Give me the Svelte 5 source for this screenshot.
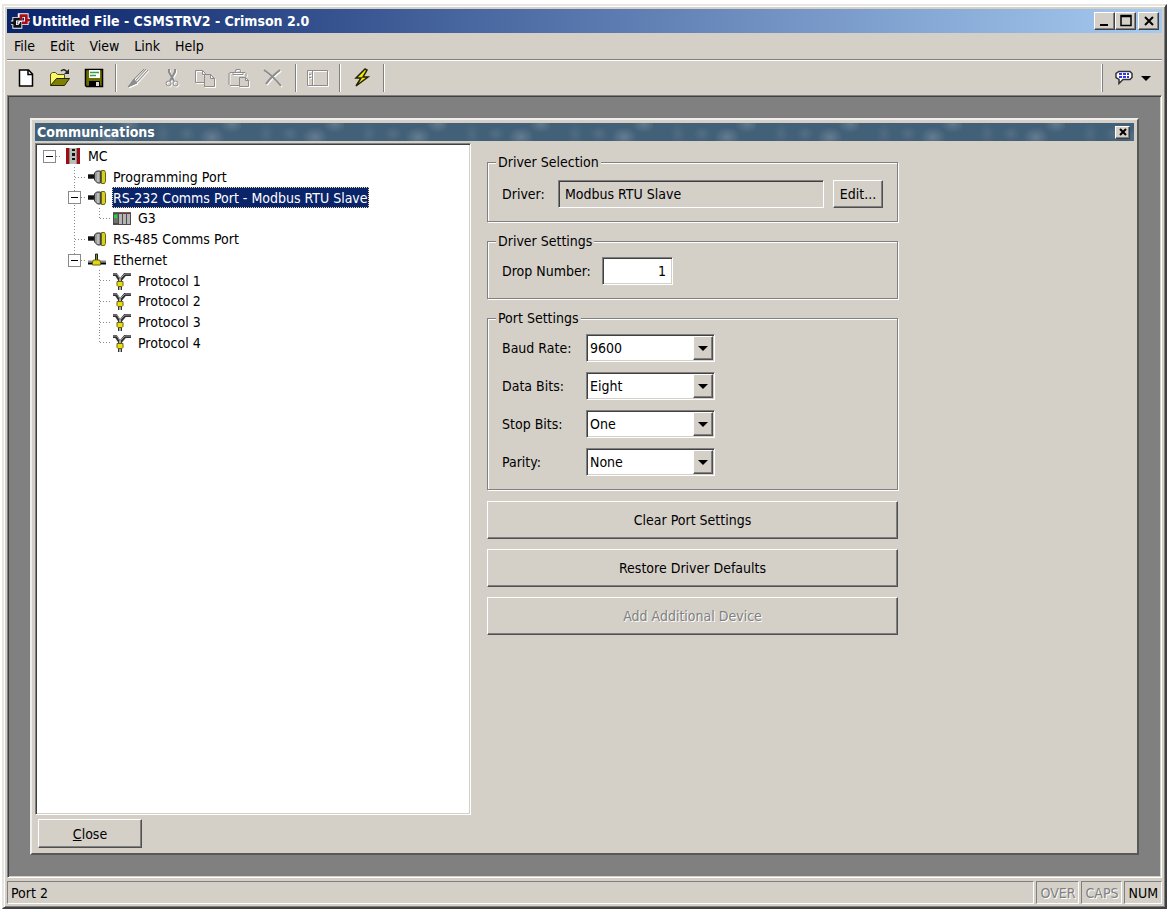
<script lang="ts">
	type Guide = 'blank' | 'line' | 'tee' | 'end' | 'root' | 'box' | 'boxend';
	type Icon = 'device' | 'port' | 'rack' | 'ethernet' | 'protocol';

	interface TreeRow {
		label: string;
		icon: Icon;
		guides: Guide[];
	}

	const menus = ['File', 'Edit', 'View', 'Link', 'Help'];

	const rows: TreeRow[] = [
		{ label: 'MC', icon: 'device', guides: ['root'] },
		{ label: 'Programming Port', icon: 'port', guides: ['blank', 'tee'] },
		{ label: 'RS-232 Comms Port - Modbus RTU Slave', icon: 'port', guides: ['blank', 'box'] },
		{ label: 'G3', icon: 'rack', guides: ['blank', 'line', 'end'] },
		{ label: 'RS-485 Comms Port', icon: 'port', guides: ['blank', 'tee'] },
		{ label: 'Ethernet', icon: 'ethernet', guides: ['blank', 'boxend'] },
		{ label: 'Protocol 1', icon: 'protocol', guides: ['blank', 'blank', 'tee'] },
		{ label: 'Protocol 2', icon: 'protocol', guides: ['blank', 'blank', 'tee'] },
		{ label: 'Protocol 3', icon: 'protocol', guides: ['blank', 'blank', 'tee'] },
		{ label: 'Protocol 4', icon: 'protocol', guides: ['blank', 'blank', 'end'] }
	];

	const portSettings = [
		{ id: 'baud', label: 'Baud Rate:', value: '9600', options: ['1200', '2400', '4800', '9600', '19200'] },
		{ id: 'data', label: 'Data Bits:', value: 'Eight', options: ['Seven', 'Eight'] },
		{ id: 'stop', label: 'Stop Bits:', value: 'One', options: ['One', 'Two'] },
		{ id: 'parity', label: 'Parity:', value: 'None', options: ['None', 'Odd', 'Even'] }
	];

	let selected = $state(2);
	let dropNumber = $state('1');
	let driver = $state('Modbus RTU Slave');
</script>

{#snippet guide(kind: Guide)}
	<svg class="guide" aria-hidden="true">
		{#if kind === 'line' || kind === 'tee' || kind === 'box'}
			<line x1="12.5" y1="0" x2="12.5" y2="100%" />
		{:else if kind === 'end' || kind === 'boxend'}
			<line x1="12.5" y1="0" x2="12.5" y2="50%" />
		{/if}
		{#if kind !== 'blank' && kind !== 'line'}
			<line x1="13" y1="10.5" x2="25" y2="10.5" />
		{/if}
		{#if kind === 'root' || kind === 'box' || kind === 'boxend'}
			<rect x="6.5" y="4.5" width="12" height="12" />
			<path d="M9 10.5h7" />
		{/if}
	</svg>
{/snippet}

{#snippet treeIcon(name: Icon)}
	<svg class="tree-icon" viewBox="0 0 20 20" aria-hidden="true">
		{#if name === 'device'}
			<rect x="4" y="2" width="13" height="16" fill="#b9bdba" />
			<rect x="4" y="2" width="3" height="16" fill="#a00c14" />
			<rect x="15" y="2" width="3" height="16" fill="#a00c14" />
			<path d="M7.5 2v16M14.5 2v16" stroke="#8a8a8a" />
			<path d="M10 3h3v2h-3zM10 7h3v3h-3zM10 12h3v2h-3z" fill="#111" />
		{:else if name === 'port'}
			<path d="M1 7.5h7M1 11.5h7" stroke="#555" />
			<path d="M1 9.5h7" stroke="#111" stroke-width="3" />
			<path d="M7.5 6l2-2h4v12h-3l-3-3z" fill="#999" stroke="#333" />
			<path d="M14.5 3.5h3l1 2v9l-1 2h-3z" fill="#d9d01c" stroke="#66661a" />
			<path d="M11 5v10" stroke="#ddd" />
			<path d="M13.5 4v12" stroke="#444" />
		{:else if name === 'rack'}
			<rect x="1" y="4" width="18" height="13" fill="#4c4c4c" />
			<rect x="2" y="6" width="4" height="9" fill="#707070" />
			<path d="M8.5 6v10M12.5 6v10M16.5 6v10" stroke="#b4b4b4" stroke-width="3" />
			<path d="M8 5h2v1h-2zM12 5h2v1h-2zM16 5h2v1h-2z" fill="#b01818" />
			<rect x="2" y="7" width="3" height="3" fill="#12e22c" />
			<path d="M1 4.5h18" stroke="#666" />
		{:else if name === 'ethernet'}
			<path d="M8.5 4h2v7h-2z" fill="#8c8c30" stroke="#222" />
			<path d="M1 11.5h18" stroke="#888" stroke-width="2" />
			<path d="M1 13.5h18" stroke="#000" stroke-width="2" />
			<path d="M6.500 10h6l1 2v3h-8v-3z" fill="#e0d714" stroke="#66620c" />
		{:else}
			<path d="M1 3.5h3l4 6 5-6h6" fill="none" stroke="#333" stroke-width="3" />
			<path d="M1 3h4l3 5 5-5h6" fill="none" stroke="#999" />
			<path d="M8 8v11" stroke="#333" stroke-width="4" />
			<path d="M8 8v11" stroke="#aaa" stroke-width="2" />
			<path d="M5 10.5h6v4l-1 1h-4l-1-1z" fill="#e8df10" stroke="#66620c" />
		{/if}
	</svg>
{/snippet}

<div class="desktop">
	<div class="window">
		<header class="title-bar">
			<svg class="app-icon" viewBox="0 0 23 20" aria-hidden="true">
				<g fill="none">
					<path d="M1 12h4M12 8h-7v8h6v-5M22 9h-5M10 12h8v-8h-7v5" stroke="#fff" stroke-width="5" />
					<path d="M12 8h-7v8h6v-5M1 12h4" stroke="#111" stroke-width="3" />
					<path d="M22 9h-4M13 12h5v-8h-6v5" stroke="#a80d18" stroke-width="3" />
					<path d="M8 12h3M10 10v3" stroke="#fff" />
				</g>
			</svg>
			<h1>Untitled File - CSMSTRV2 - Crimson 2.0</h1>
			<div class="window-buttons">
				<button type="button" aria-label="Minimize">
					<svg viewBox="0 0 16 14"><path d="M3 11h8" stroke="#000" stroke-width="2" /></svg>
				</button>
				<button type="button" aria-label="Maximize">
					<svg viewBox="0 0 16 14"><path d="M3 1.5h10v10h-10zM3 2.5h10" fill="none" stroke="#000" stroke-width="1.5" /></svg>
				</button>
				<button type="button" class="close" aria-label="Close window">
					<svg viewBox="0 0 16 14"><path d="M4 3l8 8M12 3l-8 8" stroke="#000" stroke-width="2" /></svg>
				</button>
			</div>
		</header>

		<nav class="menu-bar">
			{#each menus as menu}
				<button type="button">{menu}</button>
			{/each}
		</nav>

		<div class="tool-bar">
			<button type="button" aria-label="New">
				<svg viewBox="0 0 24 24">
					<path d="M5.5 4h9l4 4v12h-13z" fill="#fff" stroke="#000" stroke-width="1.5" />
					<path d="M14 4v4.5h5" fill="none" stroke="#000" stroke-width="1.5" />
				</svg>
			</button>
			<button type="button" aria-label="Open">
				<svg viewBox="0 0 24 24">
					<path d="M2.5 19v-11l2-1.5h3l2 2h7v4" fill="#fbf76a" stroke="#55520a" />
					<path d="M2.5 19.5l6-7h13l-5 7z" fill="#808000" stroke="#222200" />
					<path d="M13 5q3-3 6 1" fill="none" stroke="#222" stroke-width="1.5" />
					<path d="M16 8h5v-5z" fill="#222" />
				</svg>
			</button>
			<button type="button" aria-label="Save">
				<svg viewBox="0 0 24 24">
					<path d="M3.5 3.5h17v17h-16l-1-1z" fill="#6c6c00" stroke="#000" stroke-width="1.5" />
					<rect x="7" y="4" width="11" height="8" fill="#fff" />
					<path d="M8 6.5h9M8 9.5h6" stroke="#3f9d48" stroke-width="1.5" />
					<rect x="7" y="15" width="11" height="6" fill="#000" />
					<rect x="14" y="16" width="3" height="4" fill="#ddd" />
				</svg>
			</button>
			<span class="separator"></span>
			<button type="button" aria-label="Properties" disabled>
				<svg viewBox="0 0 24 24">
					<path d="M3 21l5-8 10-10M8 18l4-3 10-11M10 14l10-11" />
					<path d="M2 21l6-8 3 4z" class="solid" />
				</svg>
			</button>
			<button type="button" aria-label="Cut" disabled>
				<svg viewBox="0 0 24 24">
					<path class="heavy" d="M9 3v3l5 9M15 3v3l-5 9" />
					<circle cx="8.5" cy="17.5" r="2.5" />
					<circle cx="15.5" cy="17.5" r="2.5" />
				</svg>
			</button>
			<button type="button" aria-label="Copy" disabled>
				<svg viewBox="0 0 24 24">
					<path d="M1.5 4.5h7l3 3v9h-10zM8.5 4.5v4h3" />
					<path class="paper" d="M10.5 8.5h6l4 4v8h-10zM16.5 8.5v4h4" />
				</svg>
			</button>
			<button type="button" aria-label="Paste" disabled>
				<svg viewBox="0 0 24 24">
					<path d="M11 19.5h-9l-1-1v-11l1-1h15l1 1v3M5 8.5v-2h2l1-3h4l1 3h2v2z" />
					<path class="paper" d="M11.5 11.5h6l3 3v6h-9zM17.5 11.5v3h3" />
				</svg>
			</button>
			<button type="button" aria-label="Delete" disabled>
				<svg viewBox="0 0 24 24"><path class="heavy" d="M2 4q9 6 17 16M18 4q-9 7-14 14" /></svg>
			</button>
			<span class="separator"></span>
			<button type="button" aria-label="Toggle panes" disabled>
				<svg viewBox="0 0 24 24"><path d="M1.5 4.5h20v15h-20zM6.5 4.5v15M3 8.5h2M3 11.5h2" /></svg>
			</button>
			<span class="separator"></span>
			<button type="button" aria-label="Download">
				<svg viewBox="0 0 24 24">
					<path d="M15 3l-9 9h5l-5 8 12-9h-5l4-7z" fill="#f0e60c" stroke="#222200" stroke-width="1.5" />
				</svg>
			</button>
			<span class="separator"></span>
			<div class="language">
				<span class="separator raised"></span>
				<button type="button" aria-label="Language">
					<svg viewBox="0 0 24 24">
						<path d="M6 5.5h11l2 2v4l-2 2h-7l-4 4v-4l-3-2v-4z" fill="#fff" stroke="#333" stroke-width="1.5" />
						<path d="M6 8h10M6 11h10" stroke="#3434e8" stroke-width="2" stroke-dasharray="3 1" />
					</svg>
				</button>
				<button type="button" class="drop" aria-label="Choose language">
					<svg viewBox="0 0 10 5"><path d="M0 0h10l-5 5z" fill="#000" /></svg>
				</button>
			</div>
		</div>

		<main class="workspace sunken">
			<section class="child">
				<header class="child-title">
					<h2>Communications</h2>
					<button type="button" aria-label="Close Communications">
						<svg viewBox="0 0 12 10"><path d="M3 2l6 6M9 2l-6 6" stroke="#000" stroke-width="2" /></svg>
					</button>
				</header>

				<div class="panes">
					<div class="tree sunken" role="tree">
						<div class="rows">
							{#each rows as row, i}
								<div class="row" role="treeitem" aria-selected={selected === i}>
									{#each row.guides as kind}
										{@render guide(kind)}
									{/each}
									{@render treeIcon(row.icon)}
									<button type="button" class:selected={selected === i} onclick={() => (selected = i)}>
										{row.label}
									</button>
								</div>
							{/each}
						</div>
					</div>

					<form class="settings">
						<fieldset class="selection">
							<legend>Driver Selection</legend>
							<div class="field driver">
								<label for="driver">Driver:</label>
								<input id="driver" class="sunken" type="text" readonly bind:value={driver} />
								<button type="button">Edit...</button>
							</div>
						</fieldset>

						<fieldset>
							<legend>Driver Settings</legend>
							<div class="field drop-number">
								<label for="drop">Drop Number:</label>
								<input id="drop" class="sunken" type="text" bind:value={dropNumber} />
							</div>
						</fieldset>

						<fieldset class="port">
							<legend>Port Settings</legend>
							{#each portSettings as setting}
								<div class="field">
									<label for={setting.id}>{setting.label}</label>
									<div class="combo sunken">
										<select id={setting.id} value={setting.value}>
											{#each setting.options as option}
												<option>{option}</option>
											{/each}
										</select>
										<span class="arrow">
											<svg viewBox="0 0 10 5"><path d="M0 0h10l-5 5z" fill="#000" /></svg>
										</span>
									</div>
								</div>
							{/each}
						</fieldset>

						<div class="actions">
							<button type="button">Clear Port Settings</button>
							<button type="button">Restore Driver Defaults</button>
							<button type="button" disabled>Add Additional Device</button>
						</div>
					</form>
				</div>

				<footer class="child-footer">
					<button type="button"><u>C</u>lose</button>
				</footer>
			</section>
		</main>

		<footer class="status-bar">
			<span class="message">Port 2</span>
			<span class="off">OVER</span>
			<span class="off">CAPS</span>
			<span>NUM</span>
		</footer>
	</div>
</div>

<style>
	:global(body) {
		background: #fff;
	}

	.desktop {
		--face: #d4d0c8;
		--shadow: #808080;
		--dark: #404040;
		box-sizing: border-box;
		display: flex;
		min-height: 100vh;
		padding: 4px 5px 3px 2px;
		font-family: 'DejaVu Sans Condensed', 'DejaVu Sans', Tahoma, sans-serif;
		font-size: 14px;
		line-height: 16px;
		color: #000;
	}

	.desktop * {
		box-sizing: border-box;
	}

	button,
	input,
	select {
		margin: 0;
		padding: 0;
		border: 0;
		border-radius: 0;
		background: none;
		color: inherit;
		font: inherit;
		outline: none;
	}

	svg {
		display: block;
	}

	.sunken {
		border: 1px solid;
		border-color: var(--shadow) #fff #fff var(--shadow);
		box-shadow: inset 1px 1px var(--dark), inset -1px -1px var(--face);
	}

	.window {
		flex: 1;
		display: flex;
		flex-direction: column;
		min-width: 0;
		padding: 3px;
		background: var(--face);
		border: 2px solid;
		border-color: #e8e6e0 var(--dark) var(--dark) #e8e6e0;
		box-shadow: inset 1px 1px #fff, inset -1px -1px var(--shadow);
	}

	.title-bar {
		display: flex;
		align-items: center;
		height: 24px;
		padding: 0 3px 0 2px;
		background: linear-gradient(to right, #0a246a, #a6caf0);
		color: #fff;
	}

	.app-icon {
		width: 23px;
		height: 18px;
	}

	h1,
	h2 {
		flex: 1;
		margin: 0;
		font-size: 14px;
		font-weight: bold;
	}

	.window-buttons {
		display: flex;
	}

	.window-buttons button,
	.child-title button {
		display: grid;
		place-items: center;
		width: 21px;
		height: 18px;
		background: var(--face);
		border: 1px solid;
		border-color: #fff var(--dark) var(--dark) #fff;
		box-shadow: inset -1px -1px var(--shadow);
	}

	.window-buttons svg {
		width: 16px;
		height: 14px;
	}

	.window-buttons .close {
		margin-left: 2px;
	}

	.menu-bar {
		display: flex;
		gap: 15px;
		height: 28px;
		padding: 0 7px 2px;
		border-bottom: 1px solid #fff;
		box-shadow: inset 0 -1px var(--shadow);
	}

	.tool-bar {
		display: flex;
		align-items: center;
		gap: 10px;
		height: 34px;
		padding: 0 11px 0 7px;
	}

	.tool-bar svg {
		width: 24px;
		height: 24px;
	}

	.tool-bar button:disabled path,
	.tool-bar button:disabled circle {
		fill: none;
		stroke: #8c8c8c;
	}

	.tool-bar button:disabled svg {
		filter: drop-shadow(1px 1px #fff);
	}

	.tool-bar button:disabled .paper {
		fill: var(--face);
	}

	.tool-bar button:disabled .solid {
		fill: #8c8c8c;
	}

	.tool-bar button:disabled .heavy {
		stroke-width: 2;
	}

	.separator {
		width: 2px;
		height: 28px;
		margin: 0 -1px;
		border-left: 1px solid var(--shadow);
		border-right: 1px solid #fff;
	}

	.separator.raised {
		margin-right: 6px;
		border-left-color: #fff;
		border-right-color: var(--shadow);
	}

	.language {
		display: flex;
		align-items: center;
		gap: 4px;
		margin-left: auto;
	}

	.tool-bar .drop svg {
		width: 10px;
		height: 5px;
	}

	.workspace {
		flex: 1;
		display: flex;
		padding: 22px;
		background: var(--shadow);
	}

	.child {
		flex: 1;
		display: flex;
		flex-direction: column;
		min-width: 0;
		padding: 3px;
		background: var(--face);
		border: 2px solid;
		border-color: #f0eeea #585858 #585858 #f0eeea;
	}

	/* marbled caption, tiled along the bar */
	.child-title {
		display: flex;
		align-items: center;
		height: 18px;
		padding: 0 4px 0 2px;
		background:
			radial-gradient(13px 10px at 74px 14px, rgba(150, 165, 180, 0.4), transparent),
			radial-gradient(12px 9px at 94px 1px, rgba(150, 165, 180, 0.35), transparent),
			radial-gradient(9px 8px at 49px 11px, rgba(150, 165, 180, 0.2), transparent),
			radial-gradient(8px 12px at 25px 11px, rgba(150, 165, 180, 0.15), transparent),
			#426078;
		background-size: 103px 18px;
		color: #fff;
	}

	.child-title button {
		width: 15px;
		height: 13px;
	}

	.child-title svg {
		width: 12px;
		height: 10px;
	}

	.panes {
		flex: 1;
		display: flex;
		padding-top: 2px;
	}

	.tree {
		flex: 0 1 436px;
		padding: 1px;
		background: #fff;
	}

	/* ten rows share the height evenly */
	.rows {
		display: grid;
		grid-auto-rows: 1fr;
		height: 208px;
		padding-top: 1px;
	}

	.row {
		display: flex;
		align-items: center;
		min-height: 0;
	}

	.guide {
		width: 25px;
		height: 100%;
		overflow: visible;
	}

	.guide line {
		stroke: #8a8a8a;
		stroke-dasharray: 1 2;
	}

	.guide rect {
		fill: #fff;
		stroke: #8a8a8a;
	}

	.guide path {
		stroke: #000;
	}

	.tree-icon {
		flex: none;
		width: 20px;
		height: 20px;
		margin-right: 5px;
	}

	.row button {
		height: 100%;
		padding: 0 1px;
		white-space: nowrap;
	}

	.row button.selected {
		background: #0a246a;
		color: #fff;
		outline: 1px dotted #f5db95;
		outline-offset: -1px;
	}

	.settings {
		flex: 0 1 411px;
		margin: 11px 16px 0;
	}

	fieldset {
		height: 66px;
		min-width: 0;
		margin: 0 0 11px;
		padding: 8px 14px 0;
		border: 1px solid var(--shadow);
		box-shadow: 1px 1px #fff, inset 1px 1px #fff;
	}

	fieldset.selection {
		height: 68px;
		padding-top: 10px;
	}

	fieldset.port {
		display: flex;
		flex-direction: column;
		gap: 10px;
		height: 180px;
	}

	legend {
		margin-left: -6px;
		padding: 0 2px;
		background: var(--face);
	}

	.field {
		display: flex;
		align-items: center;
		height: 28px;
	}

	.field label {
		width: 84px;
	}

	.field input {
		height: 28px;
		padding: 0 6px;
	}

	.driver label {
		width: 56px;
	}

	.driver input {
		flex: 1;
		min-width: 0;
	}

	.driver button {
		width: 50px;
		height: 28px;
		margin-left: 9px;
	}

	.drop-number label {
		width: 100px;
	}

	.drop-number input {
		width: 71px;
		background: #fff;
		text-align: right;
	}

	.combo {
		display: grid;
		width: 129px;
		padding: 1px;
		background: #fff;
	}

	.combo select,
	.arrow {
		grid-area: 1 / 1;
		height: 24px;
	}

	.combo select {
		appearance: none;
		padding-left: 2px;
	}

	.arrow {
		display: grid;
		place-items: center;
		justify-self: end;
		width: 20px;
		pointer-events: none;
	}

	.arrow svg {
		width: 10px;
		height: 5px;
	}

	.driver button,
	.actions button,
	.child-footer button,
	.arrow {
		background: var(--face);
		border: 1px solid;
		border-color: #fff #505050 #505050 #fff;
		box-shadow: inset -1px -1px var(--shadow);
	}

	.actions {
		display: flex;
		flex-direction: column;
		gap: 10px;
	}

	.actions button {
		height: 38px;
	}

	.actions button:disabled,
	.off {
		color: var(--shadow);
		text-shadow: 1px 1px #fff;
	}

	.child-footer {
		padding: 4px 3px 2px;
	}

	.child-footer button {
		width: 104px;
		height: 29px;
	}

	.status-bar {
		display: flex;
		gap: 2px;
		padding-top: 3px;
	}

	.status-bar span {
		height: 23px;
		padding: 3px;
		border: 1px solid;
		border-color: var(--shadow) #fff #fff var(--shadow);
	}

	.status-bar .message {
		flex: 1;
	}
</style>
